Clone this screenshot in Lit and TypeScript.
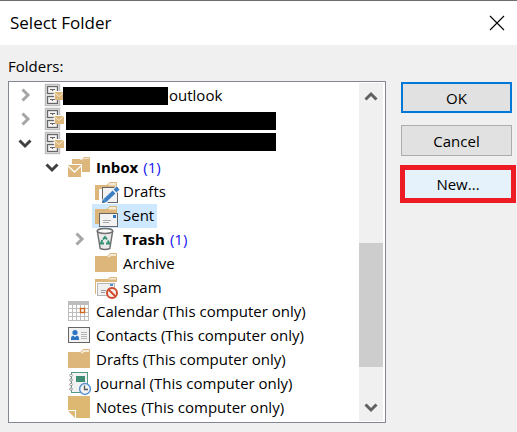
import { LitElement, html, svg, css, TemplateResult, SVGTemplateResult } from "lit";
import { customElement, property, state } from "lit/decorators.js";
import { classMap } from "lit/directives/class-map.js";
import { styleMap } from "lit/directives/style-map.js";

const folderBack = svg`
  <path d="M12 5 L15 1.5 H21.5 V6 H12Z" fill="#f3e9d8" stroke="#dcb67a"/>
  <path d="M0 4 H11.5 L14 6 L16 4 H22 V20 H0Z" fill="#dcb67a"/>`;

const openFolder = svg`
  <path d="M12 5 L15 2.5 H21.5 V6 H12Z" fill="#f3e9d8" stroke="#dcb67a"/>
  <path d="M0 5 H12 L15 6 H22 V9 H4 V20 H0Z" fill="#dcb67a"/>`;

const icons: Record<string, SVGTemplateResult> = {
  account: svg`
    <rect x="4.5" y="0.5" width="14" height="21" fill="#f4f4f4" stroke="#bcbcbc" stroke-width="1.4"/>
    <g fill="#f4f4f4" stroke="#666" stroke-width="1.3">
      <rect x="6.5" y="2.5" width="10" height="7"/>
      <rect x="6.5" y="12.5" width="10" height="7"/>
      <path d="M9 5.5H14M11 6.5H12M9 15.5H14M11 16.5H12" stroke-width="1"/>
    </g>
    <path d="M12 7 H24 V16 H14Z" fill="#fff"/>
    <path d="M12 8 H23 V16 H14 V10.5Z" fill="#dcb67a"/>
    <path d="M12 7.5 L18 12.5 L23 8" fill="none" stroke="#f7ecd9"/>`,
  inbox: svg`
    <path d="M13 5 L16 1.5 H21.5 V5Z" fill="#f3e9d8" stroke="#dcb67a"/>
    <path d="M4 3 H12 L14 5 L16 3 H22 V16 H4Z" fill="#dcb67a"/>
    <path d="M-1 8 H14 V22 H-1Z" fill="#fff"/>
    <rect x="0" y="9" width="13" height="12" fill="#dcb67a"/>
    <path d="M0 10 L6.5 16 L13 10" fill="none" stroke="#fff" stroke-width="1.3"/>`,
  drafts: svg`
    ${openFolder}
    <rect x="7.5" y="7.5" width="15" height="15" fill="#f2f2f2" stroke="#666"/>
    <path d="M23 8 L9 22" stroke="#f2f2f2" stroke-width="6"/>
    <path d="M19 12 L10 20.5" stroke="#3c7fc4" stroke-width="4"/>
    <path d="M23 8 L20 11" stroke="#3c7fc4" stroke-width="4"/>
    <path d="M8.5 19 L11.5 22 L7 23Z" fill="#3c7fc4"/>`,
  sent: svg`
    ${openFolder}
    <rect x="4.5" y="9.5" width="18" height="13" fill="#f2f2f2" stroke="#666"/>
    <rect x="18" y="11" width="3" height="3" fill="#2c74c3"/>
    <path d="M8 16.5H16M8 18.5H14" stroke="#aaa"/>`,
  trash: svg`
    <path d="M2.4 3.5 L5.2 20.5 Q10 22.5 14.8 20.5 L17.6 3.5Z" fill="#e9e9e9" stroke="#707070" stroke-width="1.5"/>
    <ellipse cx="10" cy="3" rx="7.7" ry="2.4" fill="#fafafa" stroke="#707070" stroke-width="1.5"/>
    <g fill="none" stroke="#2f9070" stroke-width="2">
      <path d="M8 11.5 L10 9 L12 11.5"/>
      <path d="M13 12.5 L14 15.5 H11"/>
      <path d="M9 15.5 H6 L7.2 12"/>
    </g>`,
  folder: folderBack,
  spam: svg`
    <path d="M12 4 L15 1.5 H21.5 V4Z" fill="#f3e9d8" stroke="#dcb67a"/>
    <path d="M0 3 H12 L14 4 H22 V6 H1 V18 H0Z" fill="#dcb67a"/>
    <rect x="2.5" y="7.5" width="17" height="12" fill="#f0f0f0" stroke="#b5b5b5"/>
    <path d="M6 14.5H11M6 16.5H10" stroke="#999"/>
    <rect x="15" y="8" width="3" height="2" fill="#5b8fd0"/>
    <circle cx="17" cy="17" r="5" fill="#f6f1ef" stroke="#cf4b2e" stroke-width="2"/>
    <path d="M13.5 13.5 L20.5 20.5" stroke="#cf4b2e" stroke-width="2"/>`,
  calendar: svg`
    <rect x="0" y="1" width="21" height="20" fill="#bdbdbd"/>
    <g fill="#fff">
      ${[5, 9, 13, 17].map((y) => [1, 5, 9, 13, 17].map((x) => svg`<rect x=${x} y=${y} width="3" height="3"/>`))}
    </g>
    <rect x="12.5" y="8.5" width="4" height="4" fill="#fff" stroke="#d0661c" stroke-width="1.4"/>`,
  contacts: svg`
    <rect x="0.5" y="3.5" width="21" height="15" fill="#f2f2f2" stroke="#666"/>
    <circle cx="7" cy="8.5" r="2.6" fill="#2c74c3"/>
    <path d="M3 16 V14 Q3 12 5 11.5 L7 13 L9 11.5 Q11 12 11 14 V16Z" fill="#2c74c3"/>
    <path d="M13 8.5H19M13 10.5H19M13 12.5H19M13 14.5H19" stroke="#b5b5b5"/>`,
  journal: svg`
    <rect x="3.5" y="0.5" width="16" height="20" fill="#f2f2f2" stroke="#4f9a83"/>
    <rect x="8" y="4" width="9" height="6" fill="#3f8d74"/>
    <g fill="#fff" stroke="#999">
      <circle cx="3" cy="3.5" r="1.3"/><circle cx="3" cy="8" r="1.3"/>
      <circle cx="3" cy="12.5" r="1.3"/><circle cx="3" cy="17" r="1.3"/>
    </g>
    <circle cx="17" cy="17" r="5.4" fill="#f4f4f4" stroke="#5b93cf" stroke-width="1.5"/>
    <path d="M16.5 13.5 V17.5 H20" fill="none" stroke="#555" stroke-width="1.3"/>`,
  notes: svg`
    <path d="M0 0 H22 V22 H8 V14 H0Z" fill="#dcb873"/>
    <path d="M0 15 H7 V22Z" fill="#dcb873"/>`,
};

interface FolderRow {
  id: string;
  level: number;
  icon: string;
  label?: string;
  count?: number;
  twisty?: "open" | "closed";
  mask?: string;
}

const rows: FolderRow[] = [
  { id: "a1", level: 0, icon: "account", twisty: "closed", mask: "short", label: "outlook" },
  { id: "a2", level: 0, icon: "account", twisty: "closed", mask: "low" },
  { id: "a3", level: 0, icon: "account", twisty: "open", mask: "high" },
  { id: "inbox", level: 1, icon: "inbox", twisty: "open", label: "Inbox", count: 1 },
  { id: "drafts", level: 2, icon: "drafts", label: "Drafts" },
  { id: "sent", level: 2, icon: "sent", label: "Sent" },
  { id: "trash", level: 2, icon: "trash", twisty: "closed", label: "Trash", count: 1 },
  { id: "archive", level: 2, icon: "folder", label: "Archive" },
  { id: "spam", level: 2, icon: "spam", label: "spam" },
  { id: "calendar", level: 1, icon: "calendar", label: "Calendar (This computer only)" },
  { id: "contacts", level: 1, icon: "contacts", label: "Contacts (This computer only)" },
  { id: "ldrafts", level: 1, icon: "folder", label: "Drafts (This computer only)" },
  { id: "journal", level: 1, icon: "journal", label: "Journal (This computer only)" },
  { id: "notes", level: 1, icon: "notes", label: "Notes (This computer only)" },
];

const chevron = (dir: "up" | "down" | "right", color: string): TemplateResult => {
  const d = {
    up: "M1.5 9.5 L7 4 L12.5 9.5",
    down: "M1.5 4.5 L7 10 L12.5 4.5",
    right: "M4.5 1.5 L10 7 L4.5 12.5",
  }[dir];
  return html`<svg width="14" height="14" viewBox="0 0 14 14" aria-hidden="true">
    <path d=${d} fill="none" stroke=${color} stroke-width="3" />
  </svg>`;
};

@customElement("folder-tree")
export class FolderTree extends LitElement {
  @property({ attribute: false }) rows: FolderRow[] = [];
  @state() private selected = "sent";

  static styles = css`
    :host {
      display: flex;
      box-sizing: border-box;
      border: 1px solid #828790;
      background: #fff;
      padding: 1px 1px 1px 2px;
    }
    .tree {
      flex: 1;
      min-width: 0;
      margin: 0;
      padding: 1px 0;
      list-style: none;
      overflow: hidden;
    }
    .row {
      display: flex;
      height: 24px;
      white-space: nowrap;
    }
    .twisty,
    .step {
      display: flex;
      align-items: center;
      justify-content: center;
      flex: none;
      padding: 0;
      border: 0;
      background: none;
    }
    .twisty {
      width: 27px;
      padding-bottom: 2px;
    }
    .item {
      display: flex;
      align-items: center;
      padding: 0 3px;
      cursor: default;
    }
    .item.selected {
      background: #cde8ff;
    }
    .icon {
      flex: none;
      margin-right: 6px;
      overflow: visible;
    }
    .label,
    .count {
      padding-bottom: 2px;
    }
    .bold {
      font-weight: 700;
    }
    .count {
      margin-left: 5px;
      color: #1414f0;
    }
    .mask {
      align-self: flex-start;
      width: 210px;
      height: 18px;
      margin-left: -3px;
      background: #000;
    }
    .mask.short {
      width: 105px;
      margin: 3px 1px 0 -6px;
    }
    .mask.low {
      margin-top: 4px;
    }
    .mask.high {
      margin-top: 1px;
    }
    .scrollbar {
      display: flex;
      flex-direction: column;
      flex: none;
      width: 24px;
      margin-right: 1px;
      background: #f0f0f0;
    }
    .step {
      height: 28px;
    }
    .before {
      flex: 132;
    }
    .thumb {
      flex: 125;
      background: #cdcdcd;
    }
    .after {
      flex: 26;
    }
  `;

  private renderRow(r: FolderRow) {
    return html`<li class="row" role="treeitem" aria-selected=${r.id === this.selected} style=${styleMap({ paddingLeft: `${r.level * 27}px` })}>
      ${r.twisty
        ? html`<button class="twisty" aria-label=${r.twisty === "open" ? "Collapse" : "Expand"}>
            ${r.twisty === "open" ? chevron("down", "#404040") : chevron("right", "#a6a6a6")}
          </button>`
        : html`<span class="twisty"></span>`}
      <span class=${classMap({ item: true, selected: r.id === this.selected })} @click=${() => (this.selected = r.id)}>
        <svg class="icon" width="22" height="24" viewBox="0 0 22 24" aria-hidden="true">${icons[r.icon]}</svg>
        ${r.mask ? html`<span class="mask ${r.mask}"></span>` : ""}
        ${r.label ? html`<span class=${classMap({ label: true, bold: !!r.count })}>${r.label}</span>` : ""}
        ${r.count ? html`<span class="count">(${r.count})</span>` : ""}
      </span>
    </li>`;
  }

  render() {
    return html`
      <ul class="tree" role="tree" aria-label="Folders">${this.rows.map((r) => this.renderRow(r))}</ul>
      <div class="scrollbar">
        <button class="step" aria-label="Scroll up">${chevron("up", "#606060")}</button>
        <div class="before"></div>
        <div class="thumb"></div>
        <div class="after"></div>
        <button class="step" aria-label="Scroll down">${chevron("down", "#606060")}</button>
      </div>
    `;
  }
}

@customElement("app-root")
export class AppRoot extends LitElement {
  static styles = css`
    :host {
      display: block;
      box-sizing: border-box;
      min-height: 100vh;
      border-top: 1px solid #6e6e6e;
      background: #f0f0f0;
      color: #000;
      font: 15px/20px "Open Sans", "Noto Sans", sans-serif;
    }
    .titlebar {
      display: flex;
      align-items: center;
      justify-content: space-between;
      height: 44px;
      padding: 0 12px 0 10px;
      background: #fff;
    }
    .title {
      margin: 0;
      font-size: 17px;
      line-height: 24px;
      font-weight: 400;
    }
    .close {
      display: flex;
      padding: 0;
      border: 0;
      background: none;
    }
    .content {
      padding: 11px 5px 8px 8px;
    }
    .columns {
      display: grid;
      grid-template-columns: 1fr 111px;
      gap: 15px;
      margin-top: 5px;
    }
    .actions {
      display: flex;
      flex-direction: column;
      gap: 12px;
      padding-top: 1px;
    }
    .btn {
      box-sizing: border-box;
      height: 31px;
      padding: 0;
      border: 1px solid #adadad;
      background: #e1e1e1;
      color: #000;
      font: inherit;
    }
    .btn.default {
      border: 2px solid #0078d7;
    }
    .btn.marked {
      height: 38px;
      margin: -3px -4px 0 -1px;
      border: 5px solid #ed1c24;
      background: #e5f1fb;
    }
  `;

  render() {
    return html`
      <header class="titlebar">
        <h1 class="title">Select Folder</h1>
        <button class="close" aria-label="Close">
          <svg width="16" height="16" viewBox="0 0 16 16"><path d="M1 1 L15 15 M15 1 L1 15" stroke="#000" stroke-width="1.1" /></svg>
        </button>
      </header>
      <main class="content">
        <div>Folders:</div>
        <div class="columns">
          <folder-tree .rows=${rows}></folder-tree>
          <div class="actions">
            <button class="btn default">OK</button>
            <button class="btn">Cancel</button>
            <button class="btn marked">New...</button>
          </div>
        </div>
      </main>
    `;
  }
}
